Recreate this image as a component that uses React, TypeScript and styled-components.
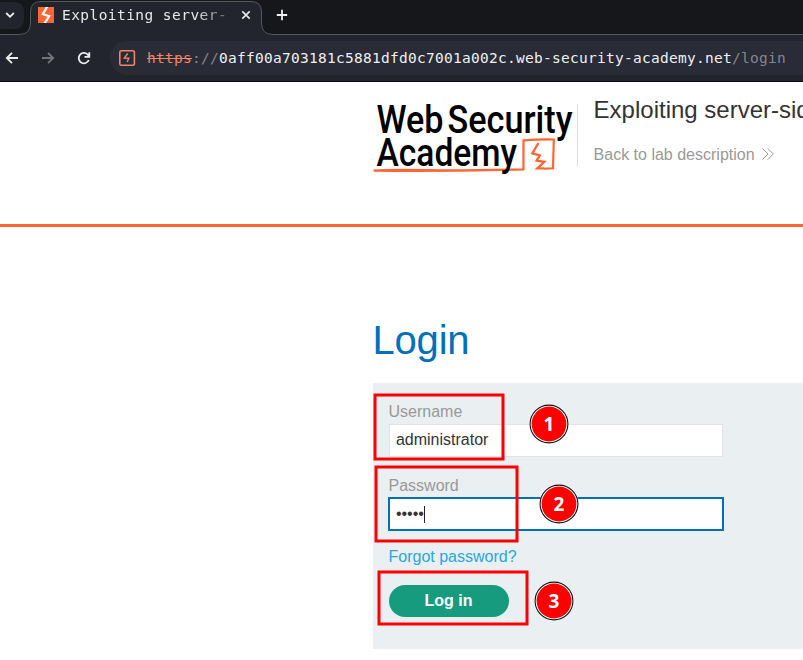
import React from "react";
import styled, { createGlobalStyle } from "styled-components";

const Global = createGlobalStyle`
  * { box-sizing: border-box; }
  body { margin: 0; background: #fff; overflow: hidden; font-family: "Liberation Sans", Arial, sans-serif; }
`;

const Window = styled.div`
  position: relative;
  width: 803px;
  height: 660px;
  overflow: hidden;
  background: #fff;
`;

const Chrome = styled.header`
  height: 82px;
  background: #22252e;
  border-bottom: 1px solid #08090b;
  font-family: "DejaVu Sans Mono", monospace;
`;

const TabStrip = styled.div`
  position: relative;
  display: flex;
  height: 35px;
`;

const StripShape = styled.svg`
  position: absolute;
  inset: 0;
`;

const TabContent = styled.div`
  position: relative;
  display: flex;
  align-items: center;
  height: 30px;
  margin-left: 38px;
`;

const TabTitle = styled.div`
  width: 168px;
  margin-left: 8px;
  overflow: hidden;
  white-space: nowrap;
  font-size: 14.5px;
  line-height: 20px;
  letter-spacing: 0.44px;
  color: #e8e8ea;
  mask-image: linear-gradient(to right, #000 134px, transparent 178px);
`;

const StripIcon = styled.svg<{ $gap: number }>`
  margin-left: ${(p) => p.$gap}px;
`;

const Toolbar = styled.div`
  display: flex;
  align-items: center;
  height: 46px;
`;

const NavIcons = styled.svg`
  flex: none;
`;

const AddressBar = styled.div`
  display: flex;
  align-items: center;
  width: 720px;
  height: 34px;
  margin-left: 10px;
  padding-left: 8px;
  flex: none;
  border-radius: 17px;
  background: #292b36;
`;

const Url = styled.div`
  margin-left: 11px;
  font-size: 14.5px;
  line-height: 20px;
  letter-spacing: 0.27px;
  white-space: nowrap;
  color: #85868d;
`;

const Scheme = styled.span`
  color: #ee8763;
  text-decoration: line-through;
`;

const Host = styled.span`
  color: #f0f0f2;
`;

const SiteHeader = styled.section`
  display: flex;
  height: 145px;
  padding: 16px 0 0 373px;
  border-bottom: 3px solid #ff6633;
`;

const LogoMark = styled.svg`
  flex: none;
`;

const Divider = styled.div`
  flex: none;
  width: 1px;
  height: 62px;
  margin: 6px 15.6px 0 0;
  background: #dedede;
`;

const LabInfo = styled.div`
  flex: none;
  white-space: nowrap;
`;

const LabTitle = styled.h2`
  margin: -2px 0 0;
  font-size: 24px;
  font-weight: 400;
  line-height: 28px;
  color: #333332;
`;

const BackLink = styled.a`
  display: flex;
  align-items: center;
  gap: 6.5px;
  margin-top: 21px;
  font-size: 16px;
  line-height: 19px;
  color: #999;
`;

const Main = styled.main`
  padding: 90px 0 0 372.5px;
`;

const PageTitle = styled.h1`
  margin: 0;
  font-size: 40px;
  font-weight: 400;
  line-height: 46px;
  letter-spacing: -0.2px;
  color: #0070ba;
`;

const LoginForm = styled.form`
  display: flex;
  flex-direction: column;
  align-items: flex-start;
  width: 500px;
  height: 266px;
  margin-top: 20px;
  padding: 19px 16px;
  background: #eaeff2;
`;

const Label = styled.label`
  font-size: 16px;
  line-height: 19px;
  color: #999;
`;

const Field = styled.div<{ $focused?: boolean }>`
  display: flex;
  align-items: center;
  width: ${(p) => (p.$focused ? 336 : 334)}px;
  height: ${(p) => (p.$focused ? 34 : 33)}px;
  margin: ${(p) => (p.$focused ? "2px 0 16px -1px" : "3px 0 19px")};
  padding: ${(p) => (p.$focused ? "0 0 0 6.4px" : "0 0 1px 6.4px")};
  border: ${(p) => (p.$focused ? "2px solid #0070ba" : "1px solid #e2e3e4")};
  background: #fff;
  font-size: 16px;
  line-height: 18px;
  color: #333;
`;

const Caret = styled.span`
  width: 1px;
  height: 17px;
  background: #222;
`;

const ForgotLink = styled.a`
  font-size: 16px;
  line-height: 19px;
  color: #29a7df;
`;

const LoginButton = styled.button`
  width: 120px;
  height: 32px;
  margin-top: 19px;
  padding: 0 0 1px;
  border: 0;
  border-radius: 16px;
  background: #179b7f;
  color: #fff;
  font: 700 16px "Liberation Sans", Arial, sans-serif;
`;

const Annotations = styled.svg`
  position: absolute;
  inset: 0;
  pointer-events: none;
`;

const BadgeNumber = styled.text`
  font: 700 19px "Noto Sans", sans-serif;
  fill: #fff;
  text-anchor: middle;
`;

const LogoText = styled.text`
  font: 500 38px Roboto, sans-serif;
  fill: #000;
`;

const boxes = [
  { x: 375, y: 395, w: 128, h: 64 },
  { x: 376, y: 467, w: 141, h: 74 },
  { x: 379, y: 572, w: 148, h: 52 },
];

const badges = [
  { n: 1, x: 549, y: 424 },
  { n: 2, x: 559, y: 504 },
  { n: 3, x: 554, y: 601 },
];

function Logo() {
  return (
    <LogoMark width="204" height="80" viewBox="373 98 204 80">
      <path d="M373.5 170.5Q395 169.5 428 170.2T523.5 169.3V140.3Q538 139.3 553.8 139.5L553 168.3L544 168.6" fill="none" stroke="#ff6633" strokeWidth="2.2" />
      <path d="M374 170.8Q400 172 455 171L500 170.4" fill="none" stroke="#ff6633" strokeWidth="1.2" />
      <path d="M538.5 143L532.3 153.4L539.8 155.4L536.6 160.6L544.3 161.8L537.3 168.3H544" fill="none" stroke="#ff6633" strokeWidth="2.3" />
      <LogoText x="376.5" y="133" textLength="67" lengthAdjust="spacingAndGlyphs">Web</LogoText>
      <LogoText x="447.5" y="133" textLength="125" lengthAdjust="spacingAndGlyphs">Security</LogoText>
      <LogoText x="376.5" y="165.5" textLength="140.5" lengthAdjust="spacingAndGlyphs">Academy</LogoText>
    </LogoMark>
  );
}

export default function App() {
  return (
    <>
      <Global />
      <Window>
        <Chrome>
          <TabStrip>
            <StripShape width="803" height="35">
              <path d="M0 0H803V34.5H273Q261.5 34.5 261.5 23V12Q261.5 1.5 251 1.5H41Q30.5 1.5 30.5 12V23Q30.5 34.5 19 34.5H0Z" fill="#15171b" />
              <path d="M0 2H14Q24 2 24 12V19Q24 29 14 29H0Z" fill="#22252e" />
              <path d="M30.5 34.5V12Q30.5 1.5 41 1.5H251Q261.5 1.5 261.5 12V34.5Z" fill="#22252e" />
              <path d="M0 34.5H19Q30.5 34.5 30.5 23V12Q30.5 1.5 41 1.5H251Q261.5 1.5 261.5 12V23Q261.5 34.5 273 34.5H803" fill="none" stroke="#55575d" />
              <path d="M6.2 13L10 16.8L13.8 13" fill="none" stroke="#eee" strokeWidth="1.8" />
            </StripShape>
            <TabContent>
              <svg width="16" height="16" viewBox="0 0 16 16">
                <path d="M0 0H16V16H0Z" fill="#ff6633" />
                <path d="M9.2 -.5L4.8 7.2L11.2 9.2L6.4 16.5" fill="none" stroke="#fff" strokeWidth="2.2" />
              </svg>
              <TabTitle>Exploiting server-</TabTitle>
              <StripIcon $gap={11} width="10" height="10"><path d="M1.3 1.3L8.7 8.7M8.7 1.3L1.3 8.7" stroke="#e6e6e8" strokeWidth="1.7" /></StripIcon>
              <StripIcon $gap={25} width="12" height="12"><path d="M6 .8V11.2M.8 6H11.2" stroke="#eee" strokeWidth="1.8" /></StripIcon>
            </TabContent>
          </TabStrip>
          <Toolbar>
            <NavIcons width="100" height="46" viewBox="0 35 100 46" fill="none" strokeWidth="1.8">
              <path d="M18 58H7M12 52.8L6.8 58L12 63.2" stroke="#ececee" />
              <path d="M42 58H53M48 52.8L53.2 58L48 63.2" stroke="#73757b" />
              <path d="M88.8 60A5.2 5.2 0 1 1 87.5 54.3L89 56M89.3 52.2V56.8H84.5" stroke="#ececee" />
            </NavIcons>
            <AddressBar>
              <svg width="18" height="18" viewBox="0 0 18 18" fill="none" stroke="#ee8763">
                <rect x="1.8" y="1.8" width="14.6" height="14.4" rx="1.4" strokeWidth="1.6" />
                <path d="M9.7 4.5L6.3 9L10.8 9.2L9.2 13" strokeWidth="1.4" />
              </svg>
              <Url><Scheme>https</Scheme>://<Host>0aff00a703181c5881dfd0c7001a002c.web-security-academy.net</Host>/login</Url>
            </AddressBar>
          </Toolbar>
        </Chrome>
        <SiteHeader>
          <Logo />
          <Divider />
          <LabInfo>
            <LabTitle>Exploiting server-side</LabTitle>
            <BackLink>
              Back to lab description
              <svg width="14" height="14" fill="none" stroke="#999"><path d="M1.5 .5L7 6L1.5 11.5M6.8 .5L12.3 6L6.8 11.5" /></svg>
            </BackLink>
          </LabInfo>
        </SiteHeader>
        <Main>
          <PageTitle>Login</PageTitle>
          <LoginForm>
            <Label>Username</Label>
            <Field>administrator</Field>
            <Label>Password</Label>
            <Field $focused>•••••<Caret /></Field>
            <ForgotLink>Forgot password?</ForgotLink>
            <LoginButton type="button">Log in</LoginButton>
          </LoginForm>
        </Main>
        <Annotations width="803" height="660">
          {boxes.map((b) => (
            <rect key={b.y} x={b.x} y={b.y} width={b.w} height={b.h} fill="none" stroke="#f00" strokeWidth="3" />
          ))}
          {badges.map((b) => (
            <g key={b.n}>
              <circle cx={b.x} cy={b.y} r="19.8" fill="#fff" fillOpacity=".8" />
              <circle cx={b.x} cy={b.y} r="18.9" fill="#fff" stroke="#111" strokeWidth="1.1" />
              <circle cx={b.x} cy={b.y} r="17.4" fill="#f00" />
              <BadgeNumber x={b.x} y={b.y + 7}>{b.n}</BadgeNumber>
            </g>
          ))}
        </Annotations>
      </Window>
    </>
  );
}
